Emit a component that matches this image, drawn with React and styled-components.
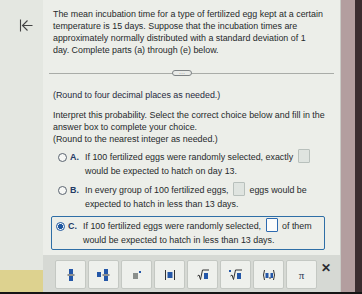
import React from "react";
import styled, { createGlobalStyle } from "styled-components";

const Global = createGlobalStyle`
  html, body { margin: 0; padding: 0; }
  body {
    width: 362px; height: 294px; overflow: hidden;
    background: #e6e9e3;
    font-family: "Liberation Sans", Arial, sans-serif;
    color: #262a2c;
  }
`;

const Screen = styled.div`
  width: 362px;
  height: 294px;
  display: flex;
  flex-direction: column;
`;

const Body = styled.div`
  flex: 1;
  display: flex;
  min-height: 0;
`;

const Sidebar = styled.div`
  width: 43px;
  display: flex;
  flex-direction: column;
  justify-content: space-between;
  background: #e4e7e1;
`;

const BackIcon = styled.div`
  padding: 18px 0 0 19px;
  height: 14px;
`;

const YellowBlock = styled.div`
  height: 22px;
  background: #ddd28f;
`;

const Main = styled.div`
  width: 297px;
  display: flex;
  flex-direction: column;
  background: #eceee9;
  border-right: 1px solid #c9cbc6;
`;

const Content = styled.div`
  flex: 1;
  padding: 8px 8px 0 10px;
  font-size: 8.9px;
  line-height: 12px;
`;

const Intro = styled.p`
  margin: 0;
  width: 273px;
`;

const Divider = styled.div`
  position: relative;
  height: 1px;
  background: #a9aca8;
  margin: 17px -2px 0 -4px;
`;

const Pill = styled.div`
  position: absolute;
  left: 123px;
  top: -3px;
  width: 20px;
  height: 6px;
  border: 1px solid #7e8385;
  border-radius: 4px;
  background: #e9ebe8;
  font-size: 6px;
  line-height: 4px;
  text-align: center;
  color: #555;
  box-sizing: border-box;
`;

const Note = styled.p`
  margin: ${(p) => p.$mt}px 0 0 0;
  color: ${(p) => p.$color || "#262a2c"};
`;

const Options = styled.div`
  margin-top: 5px;
  display: flex;
  flex-direction: column;
  gap: 5px;
`;

const Option = styled.div`
  display: flex;
  align-items: flex-start;
  line-height: 14px;
  padding: ${(p) => (p.$selected ? "2px 4px 2px 4px" : "0 4px 0 5px")};
  margin: ${(p) => (p.$selected ? "0 7px 0 -2px" : "0")};
  border: ${(p) => (p.$selected ? "1.5px solid #2e6ea6" : "none")};
  border-radius: 2px;
`;

const Radio = styled.span`
  flex: none;
  width: 7px;
  height: 7px;
  margin-top: 3px;
  border-radius: 50%;
  border: 1px solid #5a6470;
  background: ${(p) => (p.$on ? "radial-gradient(circle, #1f57a0 45%, #f4f6f5 55%)" : "#f6f7f5")};
  ${(p) => p.$on && "border-color:#1f57a0;"}
`;

const Letter = styled.span`
  flex: none;
  width: 15px;
  margin-left: 3px;
  font-weight: bold;
  color: #233a66;
`;

const OptText = styled.span`
  flex: 1;
`;

const Box = styled.span`
  display: inline-block;
  vertical-align: middle;
  width: 10px;
  height: 12px;
  margin: -3px 2px 0 2px;
  background: ${(p) => (p.$active ? "#fbfcfb" : "#dfe4e0")};
  border: 1px solid ${(p) => (p.$active ? "#2d6ab0" : "#b8c0bc")};
  border-radius: 1px;
`;

const Toolbar = styled.div`
  height: 37px;
  background: #d6d9d4;
  display: flex;
  align-items: flex-start;
  padding: 5px 0 0 12px;
  gap: 2px;
  box-sizing: border-box;
  position: relative;
`;

const ToolBtn = styled.button`
  width: 31px;
  height: 29px;
  padding: 0;
  border: 1px solid #c4c8c3;
  border-radius: 2px;
  background: #eef0ec;
  display: flex;
  align-items: center;
  justify-content: center;
  font-family: "Liberation Serif", serif;
  color: #2b3a55;
  font-size: 11px;
`;

const Close = styled.span`
  position: absolute;
  right: 9px;
  top: 6px;
  font-size: 12px;
  font-weight: bold;
  color: #2a2c30;
`;

const RightEdge = styled.div`
  width: 21px;
  display: flex;
`;

const Rose = styled.div`
  width: 14px;
  background: #b39e9f;
`;

const Dark = styled.div`
  flex: 1;
  background: #3b2d30;
`;

const BottomStrip = styled.div`
  height: 2px;
  background: #151515;
`;

const B = "#2457a8";
const G = "#8a8f8c";

const icons = [
  <svg width="8" height="14" viewBox="0 0 8 14"><rect x="2" y="1" width="4" height="5" fill={B}/><rect x="0.5" y="6.5" width="7" height="1" fill="#333"/><rect x="2" y="8" width="4" height="5" fill={B}/></svg>,
  <svg width="14" height="14" viewBox="0 0 14 14"><rect x="0" y="4" width="4" height="5" fill={B}/><rect x="7" y="1" width="4" height="5" fill={B}/><rect x="5.5" y="6.5" width="7" height="1" fill="#333"/><rect x="7" y="8" width="4" height="5" fill={B}/></svg>,
  <svg width="10" height="10" viewBox="0 0 10 10"><rect x="1" y="3" width="5" height="6" fill={G}/><rect x="7" y="1" width="2" height="2" fill={B}/></svg>,
  <svg width="12" height="12" viewBox="0 0 12 12"><rect x="1" y="1" width="1" height="10" fill="#333"/><rect x="10" y="1" width="1" height="10" fill="#333"/><rect x="3.5" y="3" width="5" height="6" fill={B}/></svg>,
  <svg width="12" height="12" viewBox="0 0 12 12"><path d="M0.5 7 L2 6 L3.5 10.5 L5.5 1 H12" fill="none" stroke="#333" strokeWidth="1"/><rect x="7" y="4" width="4" height="6" fill={B}/></svg>,
  <svg width="14" height="12" viewBox="0 0 14 12"><rect x="0" y="1" width="2" height="2" fill={B}/><path d="M1.5 7 L3 6 L4.5 10.5 L6.5 1 H13" fill="none" stroke="#333" strokeWidth="1"/><rect x="8" y="4" width="4" height="6" fill={B}/></svg>,
  <svg width="14" height="12" viewBox="0 0 14 12"><path d="M2.5 1 Q0.5 6 2.5 11" fill="none" stroke="#333" strokeWidth="1"/><path d="M11.5 1 Q13.5 6 11.5 11" fill="none" stroke="#333" strokeWidth="1"/><rect x="3.5" y="4" width="3" height="5" fill={B}/><rect x="7.5" y="8" width="1" height="2" fill="#333"/><rect x="8.5" y="4" width="2.5" height="5" fill={B}/></svg>,
  <span>π</span>,
];

export default function App() {
  return (
    <>
      <Global />
      <Screen>
        <Body>
          <Sidebar>
            <BackIcon>
              <svg width="14" height="13" viewBox="0 0 14 13">
                <path d="M1.5 0.5 V12.5 M13.5 6.5 H4 M8.5 1.5 L3.5 6.5 L8.5 11.5" fill="none" stroke="#444" strokeWidth="1.1" />
              </svg>
            </BackIcon>
            <YellowBlock />
          </Sidebar>
          <Main>
            <Content>
              <Intro>
                The mean incubation time for a type of fertilized egg kept at a certain temperature is 15 days. Suppose that the incubation times are approximately normally distributed with a standard deviation of 1<br />day. Complete parts (a) through (e) below.
              </Intro>
              <Divider>
                <Pill>···</Pill>
              </Divider>
              <Note $mt={15} $color="#262a3e">(Round to four decimal places as needed.)</Note>
              <Note $mt={8}>
                Interpret this probability. Select the correct choice below and fill in the answer box to complete your choice.
                <br />
                (Round to the nearest integer as needed.)
              </Note>
              <Options>
                <Option>
                  <Radio />
                  <Letter>A.</Letter>
                  <OptText>
                    If 100 fertilized eggs were randomly selected, exactly <Box /> would be expected to hatch on day 13.
                  </OptText>
                </Option>
                <Option>
                  <Radio />
                  <Letter>B.</Letter>
                  <OptText>
                    In every group of 100 fertilized eggs, <Box /> eggs would be expected to hatch in less than 13 days.
                  </OptText>
                </Option>
                <Option $selected>
                  <Radio $on />
                  <Letter>C.</Letter>
                  <OptText>
                    If 100 fertilized eggs were randomly selected, <Box $active /> of them would be expected to hatch in less than 13 days.
                  </OptText>
                </Option>
              </Options>
            </Content>
            <Toolbar>
              {icons.map((ic, i) => (
                <ToolBtn key={i}>{ic}</ToolBtn>
              ))}
              <Close>✕</Close>
            </Toolbar>
          </Main>
          <RightEdge>
            <Rose />
            <Dark />
          </RightEdge>
        </Body>
        <BottomStrip />
      </Screen>
    </>
  );
}
